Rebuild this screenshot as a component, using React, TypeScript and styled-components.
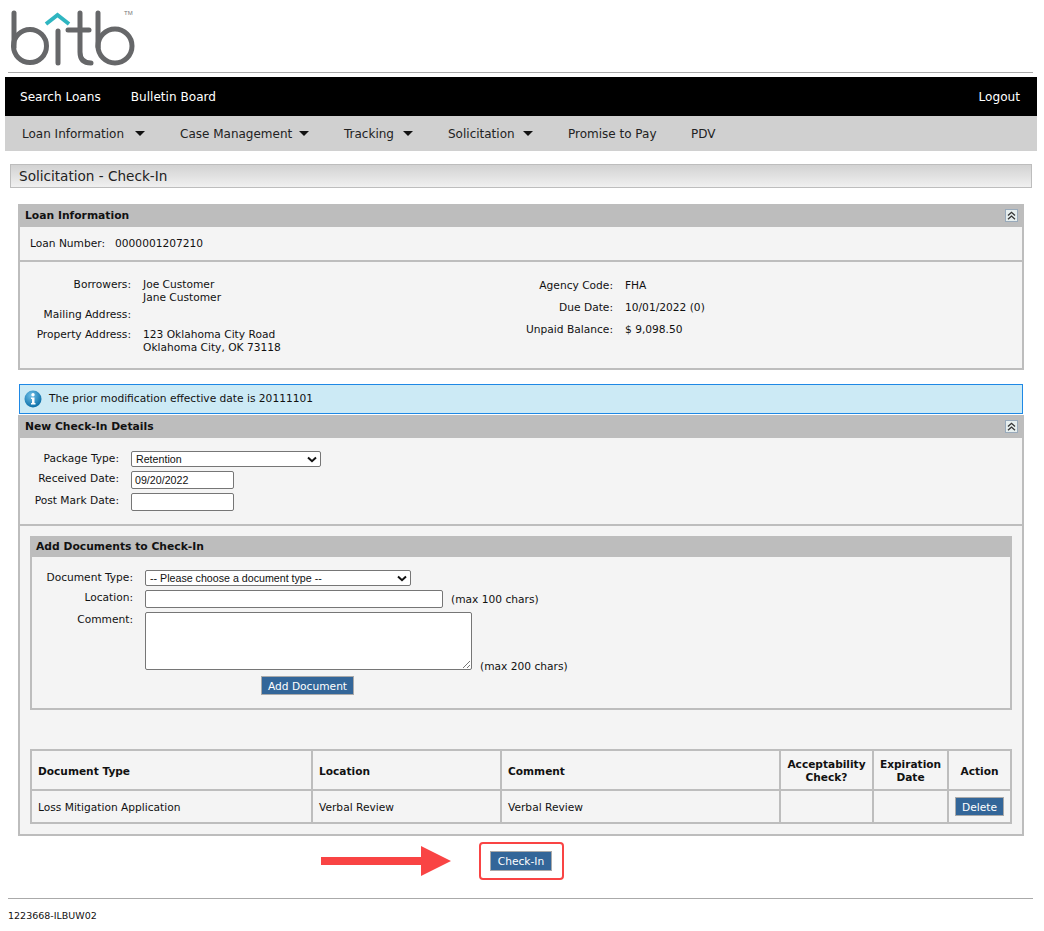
import React, { FunctionComponent } from 'react';
import styled, { createGlobalStyle } from 'styled-components';

const GlobalStyle = createGlobalStyle`
  html, body {
    margin: 0;
    padding: 0;
    background: #fff;
    color: #111;
    font-family: "DejaVu Sans", Verdana, sans-serif;
    font-size: 10.65px;
  }
`;

const Page = styled.div`
  width: 1044px;
  height: 931px;
  overflow: hidden;
`;

const LogoRow = styled.div`
  height: 72px;
  margin: 0 11px 0 8px;
  border-bottom: 1px solid #aaa;
`;

const PrimaryNav = styled.div`
  margin: 4px 7px 0 5px;
  height: 39px;
  background: #000;
  display: flex;
  align-items: center;
  padding: 0 17px 0 15px;
  gap: 30px;
`;

const PrimaryLink = styled.a<{ $right?: boolean }>`
  color: #fff;
  font-size: 12.1px;
  margin-left: ${props => (props.$right ? 'auto' : '0')};
`;

const SecondaryNav = styled.div`
  margin: 0 7px 0 5px;
  height: 35px;
  background: #d0d0d0;
  display: flex;
  align-items: center;
  padding-left: 17px;
`;

const SecondaryLink = styled.a<{ $width: number; $gap: number }>`
  width: ${props => props.$width}px;
  font-size: 12px;
  color: #222;
  display: flex;
  align-items: center;
  gap: ${props => props.$gap}px;
`;

const Caret = styled.span`
  width: 0;
  height: 0;
  border-left: 5px solid transparent;
  border-right: 5px solid transparent;
  border-top: 5px solid #111;
`;

const PageTitle = styled.div`
  margin: 13px 12px 0 10px;
  height: 24px;
  box-sizing: border-box;
  border: 1px solid #bdbdbd;
  background: linear-gradient(#d2d2d2, #f0f0f0);
  font-size: 13.6px;
  line-height: 23px;
  padding-left: 8px;
  color: #222;
`;

const Panel = styled.div<{ $top: number }>`
  margin: ${props => props.$top}px 20px 0 18px;
  border: 2px solid #bdbdbd;
  border-top: 0;
  background: #f4f4f4;
`;

const PanelHeader = styled.div`
  margin: 0 -2px;
  height: 23px;
  background: #bdbdbd;
  display: flex;
  align-items: center;
  justify-content: space-between;
  padding: 0 6px 0 7px;
  font-weight: bold;
  font-size: 10.75px;
  color: #111;
`;

const CollapseIcon = styled.span`
  width: 13px;
  height: 13px;
  display: flex;
  align-items: center;
  justify-content: center;
  background: #e6eeee;
  border: 1px solid #9ab;
  box-sizing: border-box;
`;

const LoanNumberRow = styled.div`
  height: 35px;
  display: flex;
  align-items: center;
  gap: 10px;
  padding-left: 10px;
  box-sizing: border-box;
  border-bottom: 2px solid #bdbdbd;
`;

const LoanColumns = styled.div`
  height: 106px;
  display: flex;
  padding-top: 16px;
  box-sizing: border-box;
`;

const LeftDetails = styled.div`
  width: 458px;
`;

const RightDetails = styled.div`
  padding-top: 1px;
`;

const DetailRow = styled.div<{ $gap?: number }>`
  display: flex;
  line-height: 13px;
  margin-bottom: ${props => props.$gap ?? 0}px;
`;

const DetailLabel = styled.div<{ $width: number }>`
  width: ${props => props.$width}px;
  text-align: right;
  margin-right: 12px;
  flex-shrink: 0;
`;

const InfoBox = styled.div`
  margin: 14px 21px 1px 19px;
  height: 30px;
  box-sizing: border-box;
  border: 1px solid #1e88e5;
  background: #cceaf5;
  display: flex;
  align-items: center;
  gap: 7px;
  padding: 0 0 1px 4px;
`;

const FormGrid = styled.div`
  display: grid;
  grid-template-columns: 99px auto;
  justify-content: start;
  column-gap: 12px;
  row-gap: 4px;
  height: 88px;
  align-content: start;
  padding-top: 13px;
  box-sizing: border-box;
  border-bottom: 2px solid #bdbdbd;
`;

const FieldLabel = styled.label`
  text-align: right;
  line-height: 14px;
  padding-top: 1px;
`;

const SelectBox = styled.div<{ $width: number }>`
  width: ${props => props.$width}px;
  height: 16px;
  box-sizing: border-box;
  border: 1px solid #767676;
  border-radius: 2px;
  background: #fff;
  font-family: "Liberation Sans", Arial, sans-serif;
  font-size: 10.67px;
  line-height: 14px;
  padding-left: 4px;
  display: flex;
  align-items: center;
  justify-content: space-between;
  color: #111;
`;

const TextInput = styled.div<{ $width: number; $height?: number }>`
  width: ${props => props.$width}px;
  height: ${props => props.$height ?? 18}px;
  box-sizing: border-box;
  border: 1px solid #767676;
  border-radius: 2px;
  background: #fff;
  font-family: "Liberation Sans", Arial, sans-serif;
  font-size: 10.67px;
  line-height: 16px;
  padding-left: 3px;
  position: relative;
`;

const SubPanel = styled.div`
  margin: 10px 10px 0 10px;
  border: 2px solid #bdbdbd;
  border-top: 0;
  height: 174px;
  box-sizing: border-box;
`;

const SubHeader = styled(PanelHeader)`
  height: 21px;
  padding-left: 6px;
`;

const DocGrid = styled.div`
  display: grid;
  grid-template-columns: 101px auto;
  justify-content: start;
  column-gap: 12px;
  row-gap: 4px;
  padding-top: 13px;
  align-items: start;
`;

const Hint = styled.span<{ $drop: number }>`
  margin: 0 0 ${props => -props.$drop}px 8px;
  line-height: 13px;
  align-self: flex-end;
`;

const InputLine = styled.div`
  display: flex;
`;

const Button = styled.button`
  background: #336699;
  color: #fff;
  border: 1px solid #aaa;
  font-family: "DejaVu Sans", Verdana, sans-serif;
  font-size: 10.65px;
  padding: 1px 0 0;
  height: 19px;
  margin: 0;
  white-space: nowrap;
`;

const AddRow = styled.div`
  padding: 6px 0 0 229px;
`;

const AddButton = styled(Button)`
  width: 93px;
`;

const DeleteButton = styled(Button)`
  width: 49px;
  display: block;
  margin: 0 auto;
`;

const DocTable = styled.table`
  margin: 39px 0 0 10px;
  width: 980px;
  table-layout: fixed;
  border-collapse: collapse;
  border: 2px solid #bdbdbd;
`;

const HeadCell = styled.th<{ $width: number; $left?: boolean }>`
  width: ${props => props.$width}px;
  height: 40px;
  border: 2px solid #bdbdbd;
  font-size: 10.6px;
  line-height: 13px;
  padding: 2px ${props => (props.$left ? '6px' : '2px')} 0;
  text-align: ${props => (props.$left ? 'left' : 'center')};
  color: #111;
  box-sizing: border-box;
`;

const BodyCell = styled.td<{ $tight?: boolean }>`
  height: 33px;
  border: 2px solid #bdbdbd;
  padding: ${props => (props.$tight ? '0' : '2px 6px 0')};
  box-sizing: border-box;
`;

const TableSpacer = styled.div`
  height: 10px;
`;

const ActionRow = styled.div`
  display: flex;
  align-items: center;
  padding-left: 321px;
  margin-top: 6px;
`;

const Callout = styled.div`
  margin-left: 28px;
  width: 85px;
  height: 38px;
  box-sizing: border-box;
  border: 2px solid #f94444;
  border-radius: 4px;
  display: flex;
  align-items: center;
  padding-left: 9px;
`;

const CheckInButton = styled(Button)`
  width: 62px;
  height: 20px;
`;

const Footer = styled.div`
  margin: 18px 11px 0 8px;
  border-top: 1px solid #aaa;
  padding-top: 11px;
  font-size: 9.5px;
  color: #111;
`;

const Logo = () => (
  <svg width="140" height="72" viewBox="8 0 140 72" style={{ display: 'block' }}>
    <g fill="none" stroke="#666769" strokeWidth="5" strokeLinecap="round">
      <path d="M14 13V47" />
      <circle cx="30" cy="46" r="16.500" />
      <path d="M58 31V63" />
      <path d="M80 13V52Q80 63 91 63" />
      <path d="M68 30H89" />
      <path d="M98 13V47" />
      <circle cx="115" cy="46" r="17" />
    </g>
    <path d="M46 24L57.500 15L69 24" fill="none" stroke="#2fb6c1" strokeWidth="4" />
    <text x="124" y="15" fontSize="6" fontFamily="Liberation Sans, sans-serif" fill="#777">TM</text>
  </svg>
);

const InfoIcon = () => (
  <svg width="18" height="18" viewBox="0 0 18 18">
    <defs>
      <radialGradient id="infoFill" cx="40%" cy="30%" r="70%">
        <stop offset="0%" stopColor="#6fc0e8" />
        <stop offset="100%" stopColor="#0c6fa8" />
      </radialGradient>
    </defs>
    <circle cx="9" cy="9" r="8.500" fill="url(#infoFill)" />
    <circle cx="9" cy="4.800" r="1.700" fill="#fff" />
    <path d="M7 7.500H10.500V13H11.500V14.500H7V13H8V9H7Z" fill="#fff" />
  </svg>
);

const DoubleChevron = () => (
  <svg width="9" height="9" viewBox="0 0 9 9">
    <path d="M1 4.500L4.500 1.300L8 4.500M1 8.300L4.500 5.100L8 8.300" fill="none" stroke="#333" strokeWidth="1.300" />
  </svg>
);

const SelectArrow = () => (
  <svg width="10" height="7" viewBox="0 0 10 7" style={{ marginRight: 3 }}>
    <path d="M1 1.500L5 5.200L9 1.500" fill="none" stroke="#111" strokeWidth="2" />
  </svg>
);

const ResizeGrip = () => (
  <svg width="9" height="9" viewBox="0 0 9 9" style={{ position: 'absolute', right: 0, bottom: 0 }}>
    <path d="M1 8L8 1M5 8L8 5" stroke="#777" strokeWidth="1" />
  </svg>
);

const Arrow = () => (
  <svg width="130" height="30" viewBox="0 0 130 30" style={{ display: 'block' }}>
    <path d="M0 11H100V0L130 15L100 30V19H0Z" fill="#f94444" />
  </svg>
);

const secondaryItems = [
  { label: 'Loan Information', width: 158, gap: 11, caret: true },
  { label: 'Case Management', width: 164, gap: 7, caret: true },
  { label: 'Tracking', width: 104, gap: 9, caret: true },
  { label: 'Solicitation', width: 120, gap: 8, caret: true },
  { label: 'Promise to Pay', width: 123, gap: 0, caret: false },
  { label: 'PDV', width: 40, gap: 0, caret: false },
];

const App: FunctionComponent = () => {
  return (
    <Page>
      <GlobalStyle />
      <LogoRow>
        <Logo />
      </LogoRow>
      <PrimaryNav>
        <PrimaryLink>Search Loans</PrimaryLink>
        <PrimaryLink>Bulletin Board</PrimaryLink>
        <PrimaryLink $right>Logout</PrimaryLink>
      </PrimaryNav>
      <SecondaryNav>
        {secondaryItems.map(item => (
          <SecondaryLink key={item.label} $width={item.width} $gap={item.gap}>
            {item.label}
            {item.caret && <Caret />}
          </SecondaryLink>
        ))}
      </SecondaryNav>
      <PageTitle>Solicitation - Check-In</PageTitle>

      <Panel $top={16}>
        <PanelHeader>
          Loan Information
          <CollapseIcon>
            <DoubleChevron />
          </CollapseIcon>
        </PanelHeader>
        <LoanNumberRow>
          <span>Loan Number:</span>
          <span>0000001207210</span>
        </LoanNumberRow>
        <LoanColumns>
          <LeftDetails>
            <DetailRow $gap={4}>
              <DetailLabel $width={111}>Borrowers:</DetailLabel>
              <div>
                Joe Customer
                <br />
                Jane Customer
              </div>
            </DetailRow>
            <DetailRow $gap={7}>
              <DetailLabel $width={111}>Mailing Address:</DetailLabel>
            </DetailRow>
            <DetailRow>
              <DetailLabel $width={111}>Property Address:</DetailLabel>
              <div>
                123 Oklahoma City Road
                <br />
                Oklahoma City, OK 73118
              </div>
            </DetailRow>
          </LeftDetails>
          <RightDetails>
            <DetailRow $gap={9}>
              <DetailLabel $width={135}>Agency Code:</DetailLabel>
              <div>FHA</div>
            </DetailRow>
            <DetailRow $gap={9}>
              <DetailLabel $width={135}>Due Date:</DetailLabel>
              <div>10/01/2022 (0)</div>
            </DetailRow>
            <DetailRow>
              <DetailLabel $width={135}>Unpaid Balance:</DetailLabel>
              <div>$ 9,098.50</div>
            </DetailRow>
          </RightDetails>
        </LoanColumns>
      </Panel>

      <InfoBox>
        <InfoIcon />
        The prior modification effective date is 20111101
      </InfoBox>

      <Panel $top={0}>
        <PanelHeader>
          New Check-In Details
          <CollapseIcon>
            <DoubleChevron />
          </CollapseIcon>
        </PanelHeader>
        <FormGrid>
          <FieldLabel>Package Type:</FieldLabel>
          <SelectBox $width={190}>
            Retention
            <SelectArrow />
          </SelectBox>
          <FieldLabel>Received Date:</FieldLabel>
          <TextInput $width={103}>09/20/2022</TextInput>
          <FieldLabel>Post Mark Date:</FieldLabel>
          <TextInput $width={103} />
        </FormGrid>
        <SubPanel>
          <SubHeader>Add Documents to Check-In</SubHeader>
          <DocGrid>
            <FieldLabel>Document Type:</FieldLabel>
            <InputLine>
              <SelectBox $width={266}>
                -- Please choose a document type --
                <SelectArrow />
              </SelectBox>
            </InputLine>
            <FieldLabel>Location:</FieldLabel>
            <InputLine>
              <TextInput $width={298} />
              <Hint $drop={-2}>(max 100 chars)</Hint>
            </InputLine>
            <FieldLabel>Comment:</FieldLabel>
            <InputLine>
              <TextInput $width={327} $height={58}>
                <ResizeGrip />
              </TextInput>
              <Hint $drop={3}>(max 200 chars)</Hint>
            </InputLine>
          </DocGrid>
          <AddRow>
            <AddButton>Add Document</AddButton>
          </AddRow>
        </SubPanel>
        <DocTable>
          <thead>
            <tr>
              <HeadCell $width={281} $left>Document Type</HeadCell>
              <HeadCell $width={189} $left>Location</HeadCell>
              <HeadCell $width={279} $left>Comment</HeadCell>
              <HeadCell $width={93}>
                Acceptability
                <br />
                Check?
              </HeadCell>
              <HeadCell $width={75}>
                Expiration
                <br />
                Date
              </HeadCell>
              <HeadCell $width={63}>Action</HeadCell>
            </tr>
          </thead>
          <tbody>
            <tr>
              <BodyCell>Loss Mitigation Application</BodyCell>
              <BodyCell>Verbal Review</BodyCell>
              <BodyCell>Verbal Review</BodyCell>
              <BodyCell />
              <BodyCell />
              <BodyCell $tight>
                <DeleteButton>Delete</DeleteButton>
              </BodyCell>
            </tr>
          </tbody>
        </DocTable>
        <TableSpacer />
      </Panel>

      <ActionRow>
        <Arrow />
        <Callout>
          <CheckInButton>Check-In</CheckInButton>
        </Callout>
      </ActionRow>
      <Footer>1223668-ILBUW02</Footer>
    </Page>
  );
};

export default App;
